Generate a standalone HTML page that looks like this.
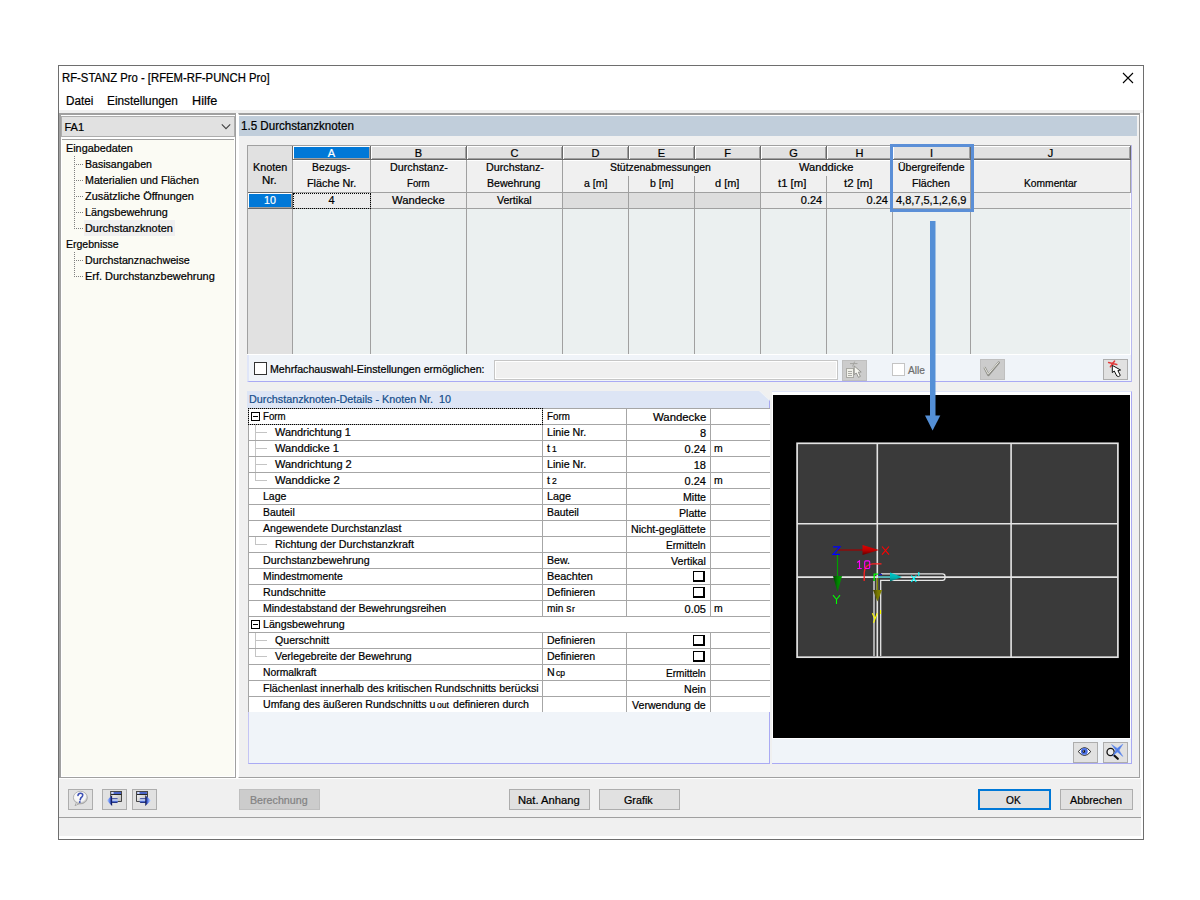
<!DOCTYPE html>
<html><head><meta charset="utf-8"><title>RF-STANZ Pro</title>
<style>
html,body{margin:0;padding:0}
body{width:1200px;height:900px;background:#fff;position:relative;overflow:hidden;font-family:"Liberation Sans",sans-serif;font-size:11px;color:#000}
div,span.t,svg{position:absolute;box-sizing:border-box}
span.t{white-space:nowrap;display:block;transform-origin:0 0;-webkit-text-stroke:0.22px currentColor}
sub{font-size:8px;vertical-align:baseline;position:relative;top:1px;margin-left:1px}
.btn{background:#e1e1e1;border:1px solid #adadad}
.btnd{background:#cccccc;border:1px solid #bfbfbf}
</style></head><body>

<div style="left:58px;top:65px;width:1086px;height:775px;background:#f0f0f0;border:1px solid #6e6e6e;"></div>
<div style="left:59px;top:66px;width:1084px;height:44px;background:#fff;"></div>
<div style="left:1140px;top:113px;width:3px;height:666px;background:#fff;"></div>
<div style="left:1141px;top:779px;width:2px;height:58px;background:#fff;"></div>
<div style="left:59px;top:836px;width:1084px;height:3px;background:#fff;"></div>
<svg style="left:1122px;top:72px" width="12" height="12" viewBox="0 0 12 12"><path d="M1 1 L11 11 M11 1 L1 11" stroke="#000" stroke-width="1.1" fill="none"/></svg>
<span class="t" style="left:62.10px;top:70.84px;font-size:12px;line-height:14px;color:#000;transform:scaleX(0.9422);">RF-STANZ Pro - [RFEM-RF-PUNCH Pro]</span>
<span class="t" style="left:66.10px;top:93.84px;font-size:12px;line-height:14px;color:#000;transform:scaleX(0.9745);">Datei</span>
<span class="t" style="left:106.90px;top:93.84px;font-size:12px;line-height:14px;color:#000;transform:scaleX(0.9840);">Einstellungen</span>
<span class="t" style="left:192.10px;top:93.84px;font-size:12px;line-height:14px;color:#000;transform:scaleX(1.0539);">Hilfe</span>
<div style="left:59px;top:113px;width:177px;height:665px;border:1px solid #a0a0a0;border-left-width:2px;border-top-width:2px;background:#fff;"></div>
<div style="left:59px;top:778px;width:1082px;height:1px;background:#fff;"></div>
<div style="left:61px;top:116px;width:174px;height:21px;background:#e1e1e1;border:1px solid #adadad;"></div>
<span class="t" style="left:64.50px;top:120.69px;font-size:11px;line-height:13px;color:#000;transform:scaleX(1.0000);">FA1</span>
<svg style="left:221px;top:123px" width="10" height="7" viewBox="0 0 10 7"><path d="M0.8 1.4 L5 5.6 L9.2 1.4" stroke="#404040" stroke-width="1.1" fill="none"/></svg>
<div style="left:62px;top:139px;width:172px;height:1px;background:#a0a0a0;"></div>
<div style="left:62px;top:140px;width:172px;height:636px;background:#fbfbf4;"></div>
<div style="left:84px;top:220px;width:91px;height:16px;background:#f0f0f0;"></div>
<span class="t" style="left:66.30px;top:141.69px;font-size:11px;line-height:13px;color:#000;transform:scaleX(0.9838);">Eingabedaten</span>
<span class="t" style="left:85.30px;top:157.69px;font-size:11px;line-height:13px;color:#000;transform:scaleX(0.9595);">Basisangaben</span>
<span class="t" style="left:85.30px;top:173.69px;font-size:11px;line-height:13px;color:#000;transform:scaleX(0.9701);">Materialien und Flächen</span>
<span class="t" style="left:85.30px;top:189.69px;font-size:11px;line-height:13px;color:#000;transform:scaleX(0.9912);">Zusätzliche Öffnungen</span>
<span class="t" style="left:85.30px;top:205.69px;font-size:11px;line-height:13px;color:#000;transform:scaleX(0.9810);">Längsbewehrung</span>
<span class="t" style="left:85.30px;top:221.69px;font-size:11px;line-height:13px;color:#000;transform:scaleX(0.9903);">Durchstanzknoten</span>
<span class="t" style="left:66.30px;top:237.69px;font-size:11px;line-height:13px;color:#000;transform:scaleX(0.9558);">Ergebnisse</span>
<span class="t" style="left:85.30px;top:253.69px;font-size:11px;line-height:13px;color:#000;transform:scaleX(0.9739);">Durchstanznachweise</span>
<span class="t" style="left:85.30px;top:269.69px;font-size:11px;line-height:13px;color:#000;transform:scaleX(0.9966);">Erf. Durchstanzbewehrung</span>
<div style="left:74px;top:156px;width:1px;height:73px;background-image:linear-gradient(to bottom,#808080 50%,transparent 50%);background-size:1px 2px;"></div>
<div style="left:74px;top:164px;width:9px;height:1px;background-image:linear-gradient(to right,#808080 50%,transparent 50%);background-size:2px 1px;"></div>
<div style="left:74px;top:180px;width:9px;height:1px;background-image:linear-gradient(to right,#808080 50%,transparent 50%);background-size:2px 1px;"></div>
<div style="left:74px;top:196px;width:9px;height:1px;background-image:linear-gradient(to right,#808080 50%,transparent 50%);background-size:2px 1px;"></div>
<div style="left:74px;top:212px;width:9px;height:1px;background-image:linear-gradient(to right,#808080 50%,transparent 50%);background-size:2px 1px;"></div>
<div style="left:74px;top:228px;width:9px;height:1px;background-image:linear-gradient(to right,#808080 50%,transparent 50%);background-size:2px 1px;"></div>
<div style="left:74px;top:252px;width:1px;height:25px;background-image:linear-gradient(to bottom,#808080 50%,transparent 50%);background-size:1px 2px;"></div>
<div style="left:74px;top:260px;width:9px;height:1px;background-image:linear-gradient(to right,#808080 50%,transparent 50%);background-size:2px 1px;"></div>
<div style="left:74px;top:276px;width:9px;height:1px;background-image:linear-gradient(to right,#808080 50%,transparent 50%);background-size:2px 1px;"></div>
<div style="left:238px;top:113px;width:902px;height:665px;border:1px solid #a0a0a0;border-top:2px solid #a0a0a0;border-left-color:#fff;background:#f0f0f0;"></div>
<div style="left:236px;top:113px;width:2px;height:665px;background:#fff;"></div>
<div style="left:239px;top:115px;width:900px;height:1px;background:#fff;"></div>
<div style="left:239px;top:116px;width:898px;height:20px;background:#c1cedb;"></div>
<span class="t" style="left:241.20px;top:118.84px;font-size:12px;line-height:14px;color:#000;transform:scaleX(0.9671);">1.5 Durchstanzknoten</span>
<div style="left:247px;top:145px;width:884px;height:209px;background:#f0f0f0;border-left:1px solid #a0a0a0;border-top:1px solid #a0a0a0;"></div>
<div style="left:247px;top:354px;width:885px;height:1px;background:#fff;"></div>
<div style="left:248px;top:146px;width:44px;height:208px;background:#e1e1e1;"></div>
<div style="left:293px;top:209px;width:837px;height:145px;background:#ebf0f0;"></div>
<div style="left:293px;top:193px;width:837px;height:15px;background:#ececec;"></div>
<div style="left:1131px;top:145px;width:1px;height:237px;background:#b8b8f0;"></div>
<div style="left:293px;top:146px;width:77px;height:13px;background:#fff;"></div>
<div style="left:294px;top:147px;width:75px;height:11px;background:#0078d7;"></div>
<div style="left:294px;top:158px;width:76px;height:1px;background:#a0a0a0;"></div>
<div style="left:369px;top:147px;width:1px;height:12px;background:#a0a0a0;"></div>
<div style="left:293px;top:159px;width:78px;height:1px;background:#696969;"></div>
<span class="t" style="left:327.83px;top:146.69px;font-size:11px;line-height:13px;color:#fff;transform:scaleX(1.0000);">A</span>
<div style="left:371px;top:146px;width:95px;height:13px;background:#fff;"></div>
<div style="left:372px;top:147px;width:93px;height:11px;background:#e1e1e1;"></div>
<div style="left:372px;top:158px;width:94px;height:1px;background:#a0a0a0;"></div>
<div style="left:465px;top:147px;width:1px;height:12px;background:#a0a0a0;"></div>
<div style="left:371px;top:159px;width:96px;height:1px;background:#696969;"></div>
<span class="t" style="left:414.83px;top:146.69px;font-size:11px;line-height:13px;color:#000;transform:scaleX(1.0000);">B</span>
<div style="left:467px;top:146px;width:95px;height:13px;background:#fff;"></div>
<div style="left:468px;top:147px;width:93px;height:11px;background:#e1e1e1;"></div>
<div style="left:468px;top:158px;width:94px;height:1px;background:#a0a0a0;"></div>
<div style="left:561px;top:147px;width:1px;height:12px;background:#a0a0a0;"></div>
<div style="left:467px;top:159px;width:96px;height:1px;background:#696969;"></div>
<span class="t" style="left:510.53px;top:146.69px;font-size:11px;line-height:13px;color:#000;transform:scaleX(1.0000);">C</span>
<div style="left:563px;top:146px;width:65px;height:13px;background:#fff;"></div>
<div style="left:564px;top:147px;width:63px;height:11px;background:#e1e1e1;"></div>
<div style="left:564px;top:158px;width:64px;height:1px;background:#a0a0a0;"></div>
<div style="left:627px;top:147px;width:1px;height:12px;background:#a0a0a0;"></div>
<div style="left:563px;top:159px;width:66px;height:1px;background:#696969;"></div>
<span class="t" style="left:591.53px;top:146.69px;font-size:11px;line-height:13px;color:#000;transform:scaleX(1.0000);">D</span>
<div style="left:629px;top:146px;width:65px;height:13px;background:#fff;"></div>
<div style="left:630px;top:147px;width:63px;height:11px;background:#e1e1e1;"></div>
<div style="left:630px;top:158px;width:64px;height:1px;background:#a0a0a0;"></div>
<div style="left:693px;top:147px;width:1px;height:12px;background:#a0a0a0;"></div>
<div style="left:629px;top:159px;width:66px;height:1px;background:#696969;"></div>
<span class="t" style="left:657.83px;top:146.69px;font-size:11px;line-height:13px;color:#000;transform:scaleX(1.0000);">E</span>
<div style="left:695px;top:146px;width:65px;height:13px;background:#fff;"></div>
<div style="left:696px;top:147px;width:63px;height:11px;background:#e1e1e1;"></div>
<div style="left:696px;top:158px;width:64px;height:1px;background:#a0a0a0;"></div>
<div style="left:759px;top:147px;width:1px;height:12px;background:#a0a0a0;"></div>
<div style="left:695px;top:159px;width:66px;height:1px;background:#696969;"></div>
<span class="t" style="left:724.14px;top:146.69px;font-size:11px;line-height:13px;color:#000;transform:scaleX(1.0000);">F</span>
<div style="left:761px;top:146px;width:65px;height:13px;background:#fff;"></div>
<div style="left:762px;top:147px;width:63px;height:11px;background:#e1e1e1;"></div>
<div style="left:762px;top:158px;width:64px;height:1px;background:#a0a0a0;"></div>
<div style="left:825px;top:147px;width:1px;height:12px;background:#a0a0a0;"></div>
<div style="left:761px;top:159px;width:66px;height:1px;background:#696969;"></div>
<span class="t" style="left:789.22px;top:146.69px;font-size:11px;line-height:13px;color:#000;transform:scaleX(1.0000);">G</span>
<div style="left:827px;top:146px;width:65px;height:13px;background:#fff;"></div>
<div style="left:828px;top:147px;width:63px;height:11px;background:#e1e1e1;"></div>
<div style="left:828px;top:158px;width:64px;height:1px;background:#a0a0a0;"></div>
<div style="left:891px;top:147px;width:1px;height:12px;background:#a0a0a0;"></div>
<div style="left:827px;top:159px;width:66px;height:1px;background:#696969;"></div>
<span class="t" style="left:855.53px;top:146.69px;font-size:11px;line-height:13px;color:#000;transform:scaleX(1.0000);">H</span>
<div style="left:893px;top:146px;width:77px;height:13px;background:#fff;"></div>
<div style="left:894px;top:147px;width:75px;height:11px;background:#e1e1e1;"></div>
<div style="left:894px;top:158px;width:76px;height:1px;background:#a0a0a0;"></div>
<div style="left:969px;top:147px;width:1px;height:12px;background:#a0a0a0;"></div>
<div style="left:893px;top:159px;width:78px;height:1px;background:#696969;"></div>
<span class="t" style="left:929.97px;top:146.69px;font-size:11px;line-height:13px;color:#000;transform:scaleX(1.0000);">I</span>
<div style="left:971px;top:146px;width:159px;height:13px;background:#fff;"></div>
<div style="left:972px;top:147px;width:157px;height:11px;background:#e1e1e1;"></div>
<div style="left:972px;top:158px;width:158px;height:1px;background:#a0a0a0;"></div>
<div style="left:1129px;top:147px;width:1px;height:12px;background:#a0a0a0;"></div>
<div style="left:971px;top:159px;width:160px;height:1px;background:#696969;"></div>
<span class="t" style="left:1047.75px;top:146.69px;font-size:11px;line-height:13px;color:#000;transform:scaleX(1.0000);">J</span>
<div style="left:293px;top:160px;width:837px;height:1px;background:#fff;"></div>
<div style="left:292px;top:146px;width:1px;height:14px;background:#696969;"></div>
<div style="left:292px;top:160px;width:1px;height:194px;background:#a0a0a0;"></div>
<div style="left:370px;top:146px;width:1px;height:14px;background:#696969;"></div>
<div style="left:370px;top:160px;width:1px;height:194px;background:#a0a0a0;"></div>
<div style="left:466px;top:146px;width:1px;height:14px;background:#696969;"></div>
<div style="left:466px;top:160px;width:1px;height:194px;background:#a0a0a0;"></div>
<div style="left:562px;top:146px;width:1px;height:14px;background:#696969;"></div>
<div style="left:562px;top:160px;width:1px;height:194px;background:#a0a0a0;"></div>
<div style="left:628px;top:146px;width:1px;height:14px;background:#696969;"></div>
<div style="left:628px;top:176px;width:1px;height:178px;background:#a0a0a0;"></div>
<div style="left:694px;top:146px;width:1px;height:14px;background:#696969;"></div>
<div style="left:694px;top:176px;width:1px;height:178px;background:#a0a0a0;"></div>
<div style="left:760px;top:146px;width:1px;height:14px;background:#696969;"></div>
<div style="left:760px;top:160px;width:1px;height:194px;background:#a0a0a0;"></div>
<div style="left:826px;top:146px;width:1px;height:14px;background:#696969;"></div>
<div style="left:826px;top:176px;width:1px;height:178px;background:#a0a0a0;"></div>
<div style="left:892px;top:146px;width:1px;height:14px;background:#696969;"></div>
<div style="left:892px;top:160px;width:1px;height:194px;background:#a0a0a0;"></div>
<div style="left:970px;top:146px;width:1px;height:14px;background:#696969;"></div>
<div style="left:970px;top:160px;width:1px;height:194px;background:#a0a0a0;"></div>
<div style="left:1130px;top:146px;width:1px;height:14px;background:#696969;"></div>
<div style="left:1130px;top:160px;width:1px;height:33px;background:#a0a0a0;"></div>
<div style="left:1130px;top:193px;width:1px;height:161px;background:#fff;"></div>
<div style="left:248px;top:192px;width:883px;height:1px;background:#a0a0a0;"></div>
<div style="left:248px;top:208px;width:883px;height:1px;background:#a0a0a0;"></div>
<span class="t" style="left:252.50px;top:160.69px;font-size:11px;line-height:13px;color:#000;transform:scaleX(0.9809);">Knoten</span>
<span class="t" style="left:262.45px;top:173.69px;font-size:11px;line-height:13px;color:#000;transform:scaleX(1.0458);">Nr.</span>
<span class="t" style="left:311.90px;top:160.69px;font-size:11px;line-height:13px;color:#000;transform:scaleX(0.9466);">Bezugs-</span>
<span class="t" style="left:306.55px;top:176.69px;font-size:11px;line-height:13px;color:#000;transform:scaleX(0.9834);">Fläche Nr.</span>
<span class="t" style="left:389.80px;top:160.69px;font-size:11px;line-height:13px;color:#000;transform:scaleX(0.9764);">Durchstanz-</span>
<span class="t" style="left:406.80px;top:176.69px;font-size:11px;line-height:13px;color:#000;transform:scaleX(0.8806);">Form</span>
<span class="t" style="left:485.95px;top:160.69px;font-size:11px;line-height:13px;color:#000;transform:scaleX(0.9764);">Durchstanz-</span>
<span class="t" style="left:486.80px;top:176.69px;font-size:11px;line-height:13px;color:#000;transform:scaleX(0.9595);">Bewehrung</span>
<span class="t" style="left:610.05px;top:160.69px;font-size:11px;line-height:13px;color:#000;transform:scaleX(0.9482);">Stützenabmessungen</span>
<span class="t" style="left:583.55px;top:176.69px;font-size:11px;line-height:13px;color:#000;transform:scaleX(0.9571);">a [m]</span>
<span class="t" style="left:649.55px;top:176.69px;font-size:11px;line-height:13px;color:#000;transform:scaleX(0.9571);">b [m]</span>
<span class="t" style="left:714.80px;top:176.69px;font-size:11px;line-height:13px;color:#000;transform:scaleX(0.9980);">d [m]</span>
<span class="t" style="left:799.05px;top:160.69px;font-size:11px;line-height:13px;color:#000;transform:scaleX(1.0091);">Wanddicke</span>
<span class="t" style="left:778.25px;top:176.69px;font-size:11px;line-height:13px;color:#000;transform:scaleX(1.0289);">t1 [m]</span>
<span class="t" style="left:844.00px;top:176.69px;font-size:11px;line-height:13px;color:#000;transform:scaleX(1.0325);">t2 [m]</span>
<span class="t" style="left:897.85px;top:160.69px;font-size:11px;line-height:13px;color:#000;transform:scaleX(0.9539);">Übergreifende</span>
<span class="t" style="left:911.80px;top:176.69px;font-size:11px;line-height:13px;color:#000;transform:scaleX(0.9659);">Flächen</span>
<span class="t" style="left:1024.20px;top:176.69px;font-size:11px;line-height:13px;color:#000;transform:scaleX(0.9322);">Kommentar</span>
<div style="left:248px;top:193px;width:44px;height:15px;background:#fff;"></div>
<div style="left:249px;top:194px;width:43px;height:14px;background:#a0a0a0;"></div>
<div style="left:249px;top:194px;width:42px;height:13px;background:#0078d7;"></div>
<div style="left:248px;top:208px;width:45px;height:1px;background:#696969;"></div>
<div style="left:292px;top:193px;width:1px;height:16px;background:#696969;"></div>
<div style="left:248px;top:192px;width:45px;height:1px;background:#696969;"></div>
<span class="t" style="left:263.75px;top:193.69px;font-size:11px;line-height:13px;color:#fff;transform:scaleX(0.9726);">10</span>
<span class="t" style="left:328.44px;top:193.69px;font-size:11px;line-height:13px;color:#000;transform:scaleX(1.0000);">4</span>
<span class="t" style="left:391.78px;top:193.69px;font-size:11px;line-height:13px;color:#000;transform:scaleX(1.0211);">Wandecke</span>
<span class="t" style="left:496.78px;top:193.69px;font-size:11px;line-height:13px;color:#000;transform:scaleX(0.9605);">Vertikal</span>
<div style="left:563px;top:193px;width:65px;height:15px;background:#dddddd;"></div>
<div style="left:629px;top:193px;width:65px;height:15px;background:#dddddd;"></div>
<div style="left:695px;top:193px;width:65px;height:15px;background:#dddddd;"></div>
<span class="t" style="left:800.79px;top:193.69px;font-size:11px;line-height:13px;color:#000;transform:scaleX(1.0000);">0.24</span>
<span class="t" style="left:866.59px;top:193.69px;font-size:11px;line-height:13px;color:#000;transform:scaleX(1.0000);">0.24</span>
<span class="t" style="left:896.25px;top:193.69px;font-size:11px;line-height:13px;color:#000;transform:scaleX(0.9995);">4,8,7,5,1,2,6,9</span>
<div style="left:293px;top:193px;width:78px;height:16px;border:1px dotted #000;"></div>
<div style="left:890px;top:144px;width:84px;height:68px;border:3px solid #5b8fd7;"></div>
<div style="left:247px;top:355px;width:884px;height:27px;background:#f0f4f9;border-bottom:1px solid #aaaaf4;border-left:2px solid #e0e6f8;"></div>
<div style="left:254px;top:362px;width:13px;height:13px;background:#fff;border:1px solid #333;"></div>
<span class="t" style="left:269.70px;top:362.69px;font-size:11px;line-height:13px;color:#000;transform:scaleX(0.9664);">Mehrfachauswahl-Einstellungen ermöglichen:</span>
<div style="left:494px;top:360px;width:344px;height:20px;background:#f0f0f0;border:1px solid #c6c6c6;box-shadow:inset 0 0 0 1px #fff;"></div>
<div class="btnd" style="left:842px;top:360px;width:25px;height:21px;"></div>
<svg style="left:842px;top:360px" width="25" height="21" viewBox="842 360 25 21"><rect x="846.5" y="368.5" width="7" height="9" fill="#f1f1ea" stroke="#a9a9a4" stroke-width="1"/><path d="M848 371.5 H852 M848 373.5 H852 M848 375.5 H852" stroke="#a9a9a4" stroke-width="1"/><path d="M850 363.6 H857.5 M854.6 361.6 L852.6 366.4" stroke="#a4a4a0" stroke-width="1" fill="none"/><path d="M854.2 366 L854.2 374.6 L856.3 373 L858.4 377.3 L860.4 376.4 L858.3 372.2 L861.2 372 Z" fill="#f6f6f0" stroke="#8e8e8a" stroke-width="0.9"/></svg>
<div style="left:892px;top:363px;width:13px;height:13px;background:#fff;border:1px solid #c4c4c4;"></div>
<span class="t" style="left:907.70px;top:363.69px;font-size:11px;line-height:13px;color:#6d6d6d;transform:scaleX(0.9213);">Alle</span>
<div class="btnd" style="left:980px;top:359px;width:25px;height:21px;"></div>
<svg style="left:980px;top:359px" width="25" height="21" viewBox="980 359 25 21"><path d="M984.8 368 L988.4 375 L998.8 362.6" stroke="#8c8c86" stroke-width="2.4" fill="none" stroke-linecap="round" stroke-linejoin="round"/><path d="M984.6 367.6 L988.2 374.2 L998.4 362.4" stroke="#e8e8e0" stroke-width="1" fill="none" stroke-linecap="round" stroke-linejoin="round"/></svg>
<div class="btn" style="left:1103px;top:359px;width:25px;height:21px;"></div>
<svg style="left:1103px;top:359px" width="25" height="21" viewBox="1103 359 25 21"><path d="M1108.6 362.6 L1116.8 364.6 M1114.6 361 L1110.4 366.8" stroke="#e23a3a" stroke-width="1.5" fill="none" stroke-linecap="round"/><path d="M1112.3 365.4 L1112.3 372.6 L1114.3 371 L1116.8 376 Q1118.6 377.4 1120.3 375.4 L1117.9 370.6 L1120.6 370 Z" fill="#fff" stroke="#111" stroke-width="1"/></svg>
<div style="left:248px;top:391px;width:522px;height:373px;background:#f0f4f9;border-left:1px solid #c4c4f4;border-bottom:1px solid #aaaaf4;border-right:1px solid #aaaaf4;"></div>
<svg style="left:248px;top:391px;overflow:visible" width="524" height="18" viewBox="0 0 524 18"><path d="M-1 0 L511 0 L522 10 L522 17 L-1 17 Z" fill="#dde5f5"/><path d="M512 0 L524 0 L524 18 L522.5 18 L522.5 10 Z" fill="#f0f0f0"/><path d="M521.5 10 L521.5 18" stroke="#a8a8f0" stroke-width="1"/></svg>
<span class="t" style="left:249.40px;top:392.69px;font-size:11px;line-height:13px;color:#164e8c;transform:scaleX(0.9803);">Durchstanzknoten-Details - Knoten Nr.&nbsp; 10</span>
<div style="left:248px;top:408px;width:522px;height:304px;background:#fff;border-top:1px solid #a6a6a6;border-left:1px solid #a6a6a6;"></div>
<div style="left:249px;top:424px;width:521px;height:1px;background:#a6a6a6;"></div>
<div style="left:542px;top:409px;width:1px;height:15px;background:#a6a6a6;"></div>
<div style="left:626px;top:409px;width:1px;height:15px;background:#a6a6a6;"></div>
<div style="left:710px;top:409px;width:1px;height:15px;background:#a6a6a6;"></div>
<span class="t" style="left:546.70px;top:409.69px;font-size:11px;line-height:13px;color:#000;transform:scaleX(0.8884);">Form</span>
<span class="t" style="left:652.70px;top:410.69px;font-size:11px;line-height:13px;color:#000;transform:scaleX(1.0337);">Wandecke</span>
<div style="left:251px;top:412px;width:9px;height:9px;border:1px solid #000;background:#fff;"></div>
<div style="left:253px;top:416px;width:5px;height:1px;background:#000;"></div>
<span class="t" style="left:263.10px;top:409.69px;font-size:11px;line-height:13px;color:#000;transform:scaleX(0.8806);">Form</span>
<div style="left:249px;top:440px;width:521px;height:1px;background:#a6a6a6;"></div>
<div style="left:542px;top:425px;width:1px;height:15px;background:#a6a6a6;"></div>
<div style="left:626px;top:425px;width:1px;height:15px;background:#a6a6a6;"></div>
<div style="left:710px;top:425px;width:1px;height:15px;background:#a6a6a6;"></div>
<span class="t" style="left:546.70px;top:425.69px;font-size:11px;line-height:13px;color:#000;transform:scaleX(0.9714);">Linie Nr.</span>
<span class="t" style="left:699.88px;top:426.69px;font-size:11px;line-height:13px;color:#000;transform:scaleX(1.0000);">8</span>
<span class="t" style="left:274.80px;top:425.69px;font-size:11px;line-height:13px;color:#000;transform:scaleX(0.9904);">Wandrichtung 1</span>
<div style="left:255px;top:432px;width:12px;height:1px;background:#c4c4c4;"></div>
<div style="left:255px;top:425px;width:1px;height:15px;background:#c4c4c4;"></div>
<div style="left:249px;top:456px;width:521px;height:1px;background:#a6a6a6;"></div>
<div style="left:542px;top:441px;width:1px;height:15px;background:#a6a6a6;"></div>
<div style="left:626px;top:441px;width:1px;height:15px;background:#a6a6a6;"></div>
<div style="left:710px;top:441px;width:1px;height:15px;background:#a6a6a6;"></div>
<span class="t" style="left:546.70px;top:441.69px;font-size:11px;line-height:13px;color:#000;transform:scaleX(0.9650);">t</span>
<span class="t" style="left:551.90px;top:444.38px;font-size:9px;line-height:11px;color:#000;transform:scaleX(0.9500);">1</span>
<span class="t" style="left:684.59px;top:442.69px;font-size:11px;line-height:13px;color:#000;transform:scaleX(1.0000);">0.24</span>
<span class="t" style="left:714.00px;top:441.69px;font-size:11px;line-height:13px;color:#000;transform:scaleX(0.9500);">m</span>
<span class="t" style="left:274.80px;top:441.69px;font-size:11px;line-height:13px;color:#000;transform:scaleX(1.0114);">Wanddicke 1</span>
<div style="left:255px;top:448px;width:12px;height:1px;background:#c4c4c4;"></div>
<div style="left:255px;top:441px;width:1px;height:15px;background:#c4c4c4;"></div>
<div style="left:249px;top:472px;width:521px;height:1px;background:#a6a6a6;"></div>
<div style="left:542px;top:457px;width:1px;height:15px;background:#a6a6a6;"></div>
<div style="left:626px;top:457px;width:1px;height:15px;background:#a6a6a6;"></div>
<div style="left:710px;top:457px;width:1px;height:15px;background:#a6a6a6;"></div>
<span class="t" style="left:546.70px;top:457.69px;font-size:11px;line-height:13px;color:#000;transform:scaleX(0.9714);">Linie Nr.</span>
<span class="t" style="left:693.76px;top:458.69px;font-size:11px;line-height:13px;color:#000;transform:scaleX(1.0000);">18</span>
<span class="t" style="left:274.80px;top:457.69px;font-size:11px;line-height:13px;color:#000;transform:scaleX(1.0008);">Wandrichtung 2</span>
<div style="left:255px;top:464px;width:12px;height:1px;background:#c4c4c4;"></div>
<div style="left:255px;top:457px;width:1px;height:15px;background:#c4c4c4;"></div>
<div style="left:249px;top:488px;width:521px;height:1px;background:#a6a6a6;"></div>
<div style="left:542px;top:473px;width:1px;height:15px;background:#a6a6a6;"></div>
<div style="left:626px;top:473px;width:1px;height:15px;background:#a6a6a6;"></div>
<div style="left:710px;top:473px;width:1px;height:15px;background:#a6a6a6;"></div>
<span class="t" style="left:546.70px;top:473.69px;font-size:11px;line-height:13px;color:#000;transform:scaleX(0.9650);">t</span>
<span class="t" style="left:551.90px;top:476.38px;font-size:9px;line-height:11px;color:#000;transform:scaleX(0.9500);">2</span>
<span class="t" style="left:684.59px;top:474.69px;font-size:11px;line-height:13px;color:#000;transform:scaleX(1.0000);">0.24</span>
<span class="t" style="left:714.00px;top:473.69px;font-size:11px;line-height:13px;color:#000;transform:scaleX(0.9500);">m</span>
<span class="t" style="left:274.80px;top:473.69px;font-size:11px;line-height:13px;color:#000;transform:scaleX(1.0240);">Wanddicke 2</span>
<div style="left:255px;top:480px;width:12px;height:1px;background:#c4c4c4;"></div>
<div style="left:255px;top:473px;width:1px;height:8px;background:#c4c4c4;"></div>
<div style="left:249px;top:504px;width:521px;height:1px;background:#a6a6a6;"></div>
<div style="left:542px;top:489px;width:1px;height:15px;background:#a6a6a6;"></div>
<div style="left:626px;top:489px;width:1px;height:15px;background:#a6a6a6;"></div>
<div style="left:710px;top:489px;width:1px;height:15px;background:#a6a6a6;"></div>
<span class="t" style="left:546.70px;top:489.69px;font-size:11px;line-height:13px;color:#000;transform:scaleX(0.9848);">Lage</span>
<span class="t" style="left:683.00px;top:490.69px;font-size:11px;line-height:13px;color:#000;transform:scaleX(0.9650);">Mitte</span>
<span class="t" style="left:263.10px;top:489.69px;font-size:11px;line-height:13px;color:#000;transform:scaleX(0.9562);">Lage</span>
<div style="left:249px;top:520px;width:521px;height:1px;background:#a6a6a6;"></div>
<div style="left:542px;top:505px;width:1px;height:15px;background:#a6a6a6;"></div>
<div style="left:626px;top:505px;width:1px;height:15px;background:#a6a6a6;"></div>
<div style="left:710px;top:505px;width:1px;height:15px;background:#a6a6a6;"></div>
<span class="t" style="left:546.70px;top:505.69px;font-size:11px;line-height:13px;color:#000;transform:scaleX(0.9454);">Bauteil</span>
<span class="t" style="left:678.86px;top:506.69px;font-size:11px;line-height:13px;color:#000;transform:scaleX(0.9650);">Platte</span>
<span class="t" style="left:263.10px;top:505.69px;font-size:11px;line-height:13px;color:#000;transform:scaleX(0.9425);">Bauteil</span>
<div style="left:249px;top:536px;width:521px;height:1px;background:#a6a6a6;"></div>
<div style="left:542px;top:521px;width:1px;height:15px;background:#a6a6a6;"></div>
<div style="left:626px;top:521px;width:1px;height:15px;background:#a6a6a6;"></div>
<div style="left:710px;top:521px;width:1px;height:15px;background:#a6a6a6;"></div>
<span class="t" style="left:631.40px;top:522.69px;font-size:11px;line-height:13px;color:#000;transform:scaleX(0.9683);">Nicht-geglättete</span>
<span class="t" style="left:263.10px;top:521.69px;font-size:11px;line-height:13px;color:#000;transform:scaleX(0.9672);">Angewendete Durchstanzlast</span>
<div style="left:249px;top:552px;width:521px;height:1px;background:#a6a6a6;"></div>
<div style="left:542px;top:537px;width:1px;height:15px;background:#a6a6a6;"></div>
<div style="left:626px;top:537px;width:1px;height:15px;background:#a6a6a6;"></div>
<div style="left:710px;top:537px;width:1px;height:15px;background:#a6a6a6;"></div>
<span class="t" style="left:666.30px;top:538.69px;font-size:11px;line-height:13px;color:#000;transform:scaleX(0.9147);">Ermitteln</span>
<span class="t" style="left:274.80px;top:537.69px;font-size:11px;line-height:13px;color:#000;transform:scaleX(0.9750);">Richtung der Durchstanzkraft</span>
<div style="left:255px;top:544px;width:12px;height:1px;background:#c4c4c4;"></div>
<div style="left:255px;top:537px;width:1px;height:8px;background:#c4c4c4;"></div>
<div style="left:249px;top:568px;width:521px;height:1px;background:#a6a6a6;"></div>
<div style="left:542px;top:553px;width:1px;height:15px;background:#a6a6a6;"></div>
<div style="left:626px;top:553px;width:1px;height:15px;background:#a6a6a6;"></div>
<div style="left:710px;top:553px;width:1px;height:15px;background:#a6a6a6;"></div>
<span class="t" style="left:546.70px;top:553.69px;font-size:11px;line-height:13px;color:#000;transform:scaleX(0.9650);">Bew.</span>
<span class="t" style="left:671.19px;top:554.69px;font-size:11px;line-height:13px;color:#000;transform:scaleX(0.9650);">Vertikal</span>
<span class="t" style="left:263.10px;top:553.69px;font-size:11px;line-height:13px;color:#000;transform:scaleX(0.9694);">Durchstanzbewehrung</span>
<div style="left:249px;top:584px;width:521px;height:1px;background:#a6a6a6;"></div>
<div style="left:542px;top:569px;width:1px;height:15px;background:#a6a6a6;"></div>
<div style="left:626px;top:569px;width:1px;height:15px;background:#a6a6a6;"></div>
<div style="left:710px;top:569px;width:1px;height:15px;background:#a6a6a6;"></div>
<span class="t" style="left:546.70px;top:569.69px;font-size:11px;line-height:13px;color:#000;transform:scaleX(0.9875);">Beachten</span>
<div style="left:693px;top:571px;width:12px;height:11px;border:1px solid #000;border-right-width:2px;border-bottom-width:2px;background:#fff;"></div>
<span class="t" style="left:263.10px;top:569.69px;font-size:11px;line-height:13px;color:#000;transform:scaleX(0.9446);">Mindestmomente</span>
<div style="left:249px;top:600px;width:521px;height:1px;background:#a6a6a6;"></div>
<div style="left:542px;top:585px;width:1px;height:15px;background:#a6a6a6;"></div>
<div style="left:626px;top:585px;width:1px;height:15px;background:#a6a6a6;"></div>
<div style="left:710px;top:585px;width:1px;height:15px;background:#a6a6a6;"></div>
<span class="t" style="left:546.70px;top:585.69px;font-size:11px;line-height:13px;color:#000;transform:scaleX(0.9593);">Definieren</span>
<div style="left:693px;top:587px;width:12px;height:11px;border:1px solid #000;border-right-width:2px;border-bottom-width:2px;background:#fff;"></div>
<span class="t" style="left:263.10px;top:585.69px;font-size:11px;line-height:13px;color:#000;transform:scaleX(0.9750);">Rundschnitte</span>
<div style="left:249px;top:616px;width:521px;height:1px;background:#a6a6a6;"></div>
<div style="left:542px;top:601px;width:1px;height:15px;background:#a6a6a6;"></div>
<div style="left:626px;top:601px;width:1px;height:15px;background:#a6a6a6;"></div>
<div style="left:710px;top:601px;width:1px;height:15px;background:#a6a6a6;"></div>
<span class="t" style="left:546.70px;top:601.69px;font-size:11px;line-height:13px;color:#000;transform:scaleX(0.9208);">min s</span>
<span class="t" style="left:572.00px;top:604.38px;font-size:9px;line-height:11px;color:#000;transform:scaleX(0.9500);">r</span>
<span class="t" style="left:684.59px;top:602.69px;font-size:11px;line-height:13px;color:#000;transform:scaleX(1.0000);">0.05</span>
<span class="t" style="left:714.00px;top:601.69px;font-size:11px;line-height:13px;color:#000;transform:scaleX(0.9500);">m</span>
<span class="t" style="left:263.10px;top:601.69px;font-size:11px;line-height:13px;color:#000;transform:scaleX(0.9571);">Mindestabstand der Bewehrungsreihen</span>
<div style="left:249px;top:632px;width:521px;height:1px;background:#a6a6a6;"></div>
<div style="left:251px;top:620px;width:9px;height:9px;border:1px solid #000;background:#fff;"></div>
<div style="left:253px;top:624px;width:5px;height:1px;background:#000;"></div>
<span class="t" style="left:263.10px;top:617.69px;font-size:11px;line-height:13px;color:#000;transform:scaleX(0.9680);">Längsbewehrung</span>
<div style="left:249px;top:648px;width:521px;height:1px;background:#a6a6a6;"></div>
<div style="left:542px;top:633px;width:1px;height:15px;background:#a6a6a6;"></div>
<div style="left:626px;top:633px;width:1px;height:15px;background:#a6a6a6;"></div>
<div style="left:710px;top:633px;width:1px;height:15px;background:#a6a6a6;"></div>
<span class="t" style="left:546.70px;top:633.69px;font-size:11px;line-height:13px;color:#000;transform:scaleX(0.9593);">Definieren</span>
<div style="left:693px;top:635px;width:12px;height:11px;border:1px solid #000;border-right-width:2px;border-bottom-width:2px;background:#fff;"></div>
<span class="t" style="left:274.80px;top:633.69px;font-size:11px;line-height:13px;color:#000;transform:scaleX(0.9636);">Querschnitt</span>
<div style="left:255px;top:640px;width:12px;height:1px;background:#c4c4c4;"></div>
<div style="left:255px;top:633px;width:1px;height:15px;background:#c4c4c4;"></div>
<div style="left:249px;top:664px;width:521px;height:1px;background:#a6a6a6;"></div>
<div style="left:542px;top:649px;width:1px;height:15px;background:#a6a6a6;"></div>
<div style="left:626px;top:649px;width:1px;height:15px;background:#a6a6a6;"></div>
<div style="left:710px;top:649px;width:1px;height:15px;background:#a6a6a6;"></div>
<span class="t" style="left:546.70px;top:649.69px;font-size:11px;line-height:13px;color:#000;transform:scaleX(0.9593);">Definieren</span>
<div style="left:693px;top:651px;width:12px;height:11px;border:1px solid #000;border-right-width:2px;border-bottom-width:2px;background:#fff;"></div>
<span class="t" style="left:274.80px;top:649.69px;font-size:11px;line-height:13px;color:#000;transform:scaleX(0.9594);">Verlegebreite der Bewehrung</span>
<div style="left:255px;top:656px;width:12px;height:1px;background:#c4c4c4;"></div>
<div style="left:255px;top:649px;width:1px;height:8px;background:#c4c4c4;"></div>
<div style="left:249px;top:680px;width:521px;height:1px;background:#a6a6a6;"></div>
<div style="left:542px;top:665px;width:1px;height:15px;background:#a6a6a6;"></div>
<div style="left:626px;top:665px;width:1px;height:15px;background:#a6a6a6;"></div>
<div style="left:710px;top:665px;width:1px;height:15px;background:#a6a6a6;"></div>
<span class="t" style="left:546.70px;top:665.69px;font-size:11px;line-height:13px;color:#000;transform:scaleX(0.9650);">N</span>
<span class="t" style="left:556.00px;top:668.38px;font-size:9px;line-height:11px;color:#000;transform:scaleX(0.9500);">cp</span>
<span class="t" style="left:666.30px;top:666.69px;font-size:11px;line-height:13px;color:#000;transform:scaleX(0.9147);">Ermitteln</span>
<span class="t" style="left:263.10px;top:665.69px;font-size:11px;line-height:13px;color:#000;transform:scaleX(0.9394);">Normalkraft</span>
<div style="left:249px;top:696px;width:521px;height:1px;background:#a6a6a6;"></div>
<div style="left:542px;top:681px;width:1px;height:15px;background:#a6a6a6;"></div>
<div style="left:626px;top:681px;width:1px;height:15px;background:#a6a6a6;"></div>
<div style="left:710px;top:681px;width:1px;height:15px;background:#a6a6a6;"></div>
<span class="t" style="left:684.17px;top:682.69px;font-size:11px;line-height:13px;color:#000;transform:scaleX(0.9650);">Nein</span>
<span class="t" style="left:263.10px;top:681.69px;font-size:11px;line-height:13px;color:#000;transform:scaleX(0.9655);">Flächenlast innerhalb des kritischen Rundschnitts berücksi</span>
<div style="left:542px;top:697px;width:1px;height:15px;background:#a6a6a6;"></div>
<div style="left:626px;top:697px;width:1px;height:15px;background:#a6a6a6;"></div>
<div style="left:710px;top:697px;width:1px;height:15px;background:#a6a6a6;"></div>
<span class="t" style="left:632.22px;top:698.69px;font-size:11px;line-height:13px;color:#000;transform:scaleX(0.9650);">Verwendung de</span>
<span class="t" style="left:263.10px;top:697.69px;font-size:11px;line-height:13px;color:#000;transform:scaleX(0.9617);">Umfang des äußeren Rundschnitts u</span>
<span class="t" style="left:437.10px;top:700.38px;font-size:9px;line-height:11px;color:#000;transform:scaleX(0.9500);">out</span>
<span class="t" style="left:452.50px;top:697.69px;font-size:11px;line-height:13px;color:#000;transform:scaleX(0.9621);">definieren durch</span>
<div style="left:248px;top:408px;width:295px;height:17px;border:1px dotted #000;"></div>
<div style="left:772px;top:391px;width:360px;height:373px;background:#f0f4f9;border-right:1px solid #aaaaf4;border-bottom:1px solid #aaaaf4;border-top:1px solid #dfe4f8;"></div>
<div style="left:772px;top:392px;width:359px;height:347px;background:#fff;"></div>
<div style="left:773px;top:395px;width:357px;height:343px;background:#000;"></div>
<svg style="left:773px;top:395px" width="358" height="343" viewBox="773 395 358 343"><rect x="797.1" y="443.3" width="320.8" height="213.9" fill="#3a3a3a" stroke="#e4e4e4" stroke-width="1.7"/><path d="M877.3 443 V657 M1011.1 443 V657 M797 523.8 H1118 M797 577.1 H1118" stroke="#e4e4e4" stroke-width="1.6" fill="none"/><path d="M881 573.8 H942.5 Q945 573.8 945 576 V578 Q945 580.3 942.5 580.3 H880.7 V656" stroke="#e6e6e6" stroke-width="1.3" fill="none"/><path d="M874 581 V656" stroke="#e6e6e6" stroke-width="1.3" fill="none"/><path d="M838 550 H863" stroke="#a00000" stroke-width="1.2"/><defs><linearGradient id="gr" x1="0" y1="0" x2="0" y2="1"><stop offset="0" stop-color="#e00000"/><stop offset="0.5" stop-color="#c00000"/><stop offset="1" stop-color="#600000"/></linearGradient><linearGradient id="gg" x1="0" y1="0" x2="1" y2="0"><stop offset="0" stop-color="#004000"/><stop offset="0.5" stop-color="#008000"/><stop offset="1" stop-color="#00a000"/></linearGradient><linearGradient id="gc" x1="0" y1="0" x2="0" y2="1"><stop offset="0" stop-color="#00d0d0"/><stop offset="0.6" stop-color="#00b0b0"/><stop offset="1" stop-color="#006868"/></linearGradient><linearGradient id="go" x1="0" y1="0" x2="1" y2="0"><stop offset="0" stop-color="#404000"/><stop offset="0.5" stop-color="#787800"/><stop offset="1" stop-color="#8a8a00"/></linearGradient></defs><path d="M862.5 545 L879 550 L862.5 555 Z" fill="url(#gr)"/><path d="M837.5 555 V577" stroke="#00a000" stroke-width="1.2"/><path d="M833 576 L842 576 L837.5 592 Z" fill="url(#gg)"/><path d="M833 546.8 H840 L833 554.4 H840" stroke="#0000ff" stroke-width="1.2" fill="none"/><path d="M882 546.5 L889 554.7 M889 546.5 L882 554.7" stroke="#ff0000" stroke-width="1.1" fill="none"/><path d="M833 595.2 L836.5 599.5 L840 595.2 M836.5 599.5 V604" stroke="#00ff00" stroke-width="1.1" fill="none"/><path d="M864.2 581 V573 Q864.5 564 873 563.9 H881.5" stroke="#ff2020" stroke-width="1.3" fill="none"/><path d="M857.2 562.5 L859.5 560.8 V568.5 M857.3 568.5 H861.8" stroke="#ff00ff" stroke-width="1.1" fill="none"/><rect x="864.7" y="560.9" width="5" height="7.6" rx="1.2" fill="none" stroke="#ff00ff" stroke-width="1.1"/><path d="M874.2 581 V574.2 H878.4" stroke="#00ff00" stroke-width="1.3" fill="none"/><path d="M878.4 574.5 H882" stroke="#1818c8" stroke-width="1.2" fill="none"/><path d="M878 577 H891" stroke="#00a0a0" stroke-width="1.2"/><path d="M890 572.5 L902 577 L890 581.5 Z" fill="url(#gc)"/><path d="M877.3 578 V591" stroke="#808000" stroke-width="1.4"/><path d="M873 590 L882 590 L877.5 601.5 Z" fill="url(#go)"/><path d="M911.3 575.5 L916.3 581.8 M916.3 575.5 L911.3 581.8 M918.8 572 V576" stroke="#00ffff" stroke-width="1.1" fill="none"/><path d="M872.3 613.3 L874.8 618.5 M877.2 613.3 L873.5 622.8 M880.5 610 V614" stroke="#ffff00" stroke-width="1.1" fill="none"/></svg>
<div class="btn" style="left:1073px;top:742px;width:25px;height:21px;"></div>
<svg style="left:1073px;top:742px" width="25" height="21" viewBox="1073 742 25 21"><path d="M1078.2 751.6 Q1084.5 743.6 1090.8 751.6 Q1084.5 759.4 1078.2 751.6 Z" fill="#fff" stroke="#222" stroke-width="1"/><circle cx="1084.3" cy="751.4" r="3.4" fill="#4a6fe4"/><circle cx="1083.8" cy="751.4" r="1.3" fill="#111"/><circle cx="1083.5" cy="751" r="0.5" fill="#fff"/></svg>
<div class="btn" style="left:1103px;top:742px;width:25px;height:21px;"></div>
<svg style="left:1103px;top:742px" width="25" height="21" viewBox="1103 742 25 21"><circle cx="1110.6" cy="752" r="3.6" fill="#ececec" stroke="#111" stroke-width="1.3"/><path d="M1113.4 754.8 L1117.8 758.8" stroke="#111" stroke-width="2.2" stroke-linecap="round"/><path d="M1111.6 744.6 L1118.4 749.2 L1122.8 756.4 L1116.4 751 Z M1122.8 744.2 L1118.6 751 L1112.8 755.8 L1116.4 749 Z" fill="#4c7ae6" stroke="#6a90ee" stroke-width="0.6" stroke-linejoin="round"/></svg>
<svg style="left:920px;top:218px" width="26" height="216" viewBox="920 218 26 216"><rect x="930" y="221" width="5.5" height="196" fill="#548fd6"/><path d="M925 415.5 L940.3 415.5 L932.6 430.5 Z" fill="#548fd6"/></svg>
<div class="btn" style="left:68px;top:789px;width:25px;height:21px;"></div>
<div class="btn" style="left:102px;top:789px;width:25px;height:21px;"></div>
<div class="btn" style="left:132px;top:789px;width:25px;height:21px;"></div>
<svg style="left:58px;top:785px" width="110" height="30" viewBox="58 785 110 30"><defs><radialGradient id="bub" cx="0.45" cy="0.4" r="0.6"><stop offset="0" stop-color="#ffffff"/><stop offset="0.7" stop-color="#f4f4f4"/><stop offset="1" stop-color="#a8a8a8"/></radialGradient><linearGradient id="arr" x1="0" y1="0" x2="0" y2="1"><stop offset="0" stop-color="#1c2c90"/><stop offset="0.4" stop-color="#e4eeff"/><stop offset="0.65" stop-color="#5c7ce0"/><stop offset="1" stop-color="#0c1660"/></linearGradient><linearGradient id="hl" x1="0" y1="0" x2="1" y2="0"><stop offset="0" stop-color="#dcecff"/><stop offset="0.55" stop-color="#5c80ec"/><stop offset="0.85" stop-color="#18247c"/><stop offset="1" stop-color="#05082a"/></linearGradient><linearGradient id="hr" x1="1" y1="0" x2="0" y2="0"><stop offset="0" stop-color="#dcecff"/><stop offset="0.55" stop-color="#5c80ec"/><stop offset="0.85" stop-color="#18247c"/><stop offset="1" stop-color="#05082a"/></linearGradient><linearGradient id="win" x1="0" y1="0" x2="1" y2="1"><stop offset="0" stop-color="#ffffff"/><stop offset="1" stop-color="#b8b8b8"/></linearGradient></defs><path d="M75 805.6 L77.2 801.2 L80.6 803.2 Z" fill="#fff" stroke="#9a9a9a" stroke-width="0.8"/><ellipse cx="80.4" cy="797.6" rx="7" ry="6.3" fill="url(#bub)" stroke="#a0a0a0" stroke-width="0.7"/><path d="M78 795.4 Q78.4 793 80.8 793.2 Q83.2 793.6 82.6 795.8 Q82.2 797 80.8 798 L80.2 799.8" stroke="#3c4fb4" stroke-width="1.6" fill="none" stroke-linecap="round"/><circle cx="79.8" cy="802" r="0.95" fill="#3c4fb4"/><rect x="110.7" y="791.5" width="10.8" height="10" fill="url(#win)" stroke="#222" stroke-width="0.8"/><rect x="111.2" y="792" width="9.8" height="2" fill="#4a64c8"/><rect x="111.4" y="792.2" width="2.2" height="1.5" fill="#fff"/><path d="M111 794.5 H121.4" stroke="#111" stroke-width="0.9"/><rect x="111.5" y="798" width="6.4" height="5" rx="1.2" fill="url(#arr)"/><path d="M106.7 800.5 L112.1 795.3 L112.1 805.9 Z" fill="url(#hl)"/><rect x="136.6" y="791.5" width="10.8" height="10" fill="url(#win)" stroke="#222" stroke-width="0.8"/><rect x="137.1" y="792" width="9.8" height="2" fill="#4a64c8"/><rect x="137.3" y="792.2" width="2.2" height="1.5" fill="#fff"/><path d="M137 794.5 H147.3" stroke="#111" stroke-width="0.9"/><rect x="139.7" y="798" width="6.4" height="5" rx="1.2" fill="url(#arr)"/><path d="M151.1 800.5 L145.3 795.3 L145.3 805.9 Z" fill="url(#hr)"/></svg>
<div class="btnd" style="left:239px;top:789px;width:81px;height:21px;"></div>
<span class="t" style="left:249.90px;top:793.69px;font-size:11px;line-height:13px;color:#838383;transform:scaleX(0.9709);">Berechnung</span>
<div class="btn" style="left:509px;top:789px;width:81px;height:21px;"></div>
<span class="t" style="left:517.85px;top:793.69px;font-size:11px;line-height:13px;color:#000;transform:scaleX(1.0206);">Nat. Anhang</span>
<div class="btn" style="left:599px;top:789px;width:81px;height:21px;"></div>
<span class="t" style="left:624.25px;top:793.69px;font-size:11px;line-height:13px;color:#000;transform:scaleX(0.9783);">Grafik</span>
<div style="left:978px;top:789px;width:73px;height:21px;background:#e1e1e1;border:2px solid #0078d7;"></div>
<span class="t" style="left:1005.95px;top:793.69px;font-size:11px;line-height:13px;color:#000;transform:scaleX(0.9249);">OK</span>
<div class="btn" style="left:1060px;top:789px;width:73px;height:21px;"></div>
<span class="t" style="left:1069.55px;top:793.69px;font-size:11px;line-height:13px;color:#000;transform:scaleX(0.9792);">Abbrechen</span>
<div style="left:59px;top:817px;width:1082px;height:1px;background:#a0a0a0;"></div>
</body></html>
